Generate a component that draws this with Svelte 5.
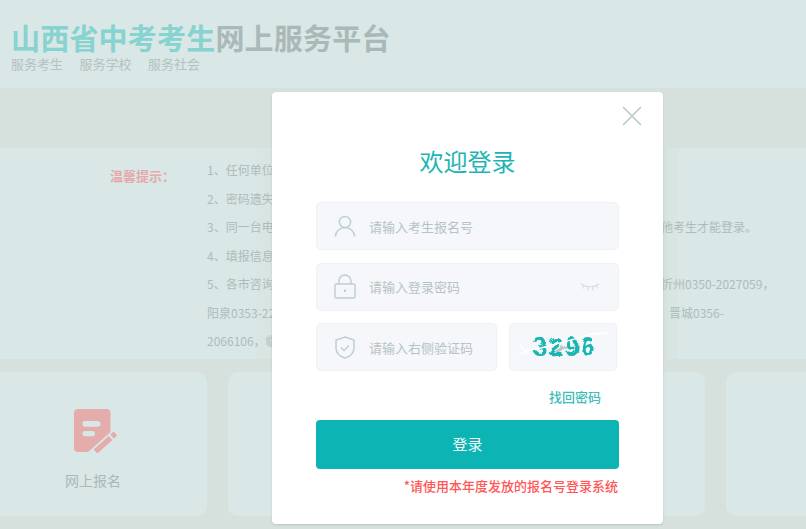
<script>
  const subNav = ['服务考生', '服务学校', '服务社会'];
  // 弹窗后面的提示文字，只有露出来的部分才写全
  const tips = [
    { lead: '1、任何单位' },
    { lead: '2、密码遗失' },
    { lead: '3、同一台电', tail: '他考生才能登录。' },
    { lead: '4、填报信息' },
    { lead: '5、各市咨询', tail: '忻州0350-2027059，' },
    { lead: '阳泉0353-22', tail: '晋城0356-', shift: true },
    { lead: '2066106，临' }
  ];
</script>

<div class="page">
  <header class="top">
    <h1><span class="accent">山西省中考考生</span>网上服务平台</h1>
    <nav class="sub">
      {#each subNav as item}
        <span>{item}</span>
      {/each}
    </nav>
  </header>

  <div class="band"></div>

  <section class="notice">
    <div class="notice-title">温馨提示：</div>
    <div class="notice-list">
      {#each tips as tip}
        <div class="tip">
          <span class="lead">{tip.lead}</span>
          {#if tip.tail}
            <span class="tail" class:shift={tip.shift}>{tip.tail}</span>
          {/if}
        </div>
      {/each}
    </div>
  </section>

  <section class="cards">
    <div class="card">
      <svg class="card-icon" viewBox="0 0 43 44" width="43" height="44" aria-hidden="true">
        <path d="M4 0h28.500a4 4 0 0 1 4 4v19L14 43H4a4 4 0 0 1-4-4V4a4 4 0 0 1 4-4z" fill="#e5acac" />
        <rect x="8.500" y="12" width="18" height="5.700" rx="2.850" fill="#d9e7e6" />
        <rect x="8.500" y="22" width="12.500" height="5.200" rx="2.600" fill="#d9e7e6" />
        <path d="M21.500 42.500l15-13.500M38 27.500l3.500-3" stroke="#e5acac" stroke-width="5.500" fill="none" />
      </svg>
      <div class="card-label">网上报名</div>
    </div>
    <div class="card"></div>
    <div class="card"></div>
    <div class="card"></div>
  </section>

  <div class="modal">
    <button class="close" aria-label="关闭">
      <svg viewBox="0 0 20 20" width="20" height="20">
        <path d="M1 1l18 18M19 1L1 19" stroke="#bccccb" stroke-width="1.700" fill="none" />
      </svg>
    </button>

    <h2>欢迎登录</h2>

    <div class="field">
      <svg class="ico" viewBox="0 0 22 22" width="22" height="22">
        <circle cx="11" cy="7" r="5.600" />
        <path d="M1.300 21.500c.6-5.400 4.600-8.900 9.700-8.900s9.100 3.500 9.700 8.900" />
      </svg>
      <span class="ph">请输入考生报名号</span>
    </div>

    <div class="field">
      <svg class="ico" viewBox="0 0 22 25" width="22" height="25">
        <rect x="1" y="10" width="20" height="14" rx="1.500" />
        <path d="M5 10V7a6 6 0 0 1 12 0v3" />
        <path d="M11 15.500v2.500" stroke-width="2" />
      </svg>
      <span class="ph">请输入登录密码</span>
      <svg class="eye" viewBox="0 0 20 12" width="20" height="12">
        <path d="M1 2.500c2.500 2.300 5.500 3.300 9 3.300s6.500-1 9-3.300M4 4.500L2.200 7.500M8 5.800l-.5 3.700M12.500 5.800l.5 3.700M16 4.500l1.800 3" />
      </svg>
    </div>

    <div class="verify">
      <div class="field grow">
        <svg class="ico" viewBox="0 0 22 23" width="22" height="23">
          <path d="M11 1l9 3v8c0 5-3.800 8.300-9 10-5.200-1.700-9-5-9-10V4z" />
          <path d="M7 11.500l3 3 5-5" />
        </svg>
        <span class="ph">请输入右侧验证码</span>
      </div>
      <div class="captcha">
        <svg viewBox="0 0 108 48" width="108" height="48">
          <defs>
            <filter id="smear" x="-10%" y="-30%" width="120%" height="160%">
              <feTurbulence type="fractalNoise" baseFrequency="0.09" numOctaves="2" seed="4" />
              <feDisplacementMap in="SourceGraphic" scale="7" />
              <feGaussianBlur stdDeviation="0.6" />
            </filter>
          </defs>
          <path d="M44 33l16-11" stroke="#b5c4c4" stroke-width="3" filter="url(#smear)" />
          <text class="code" x="24" y="33" filter="url(#smear)">3296</text>
          <path d="M10 19l8 13M9 32l11-5 12-2 34-9 16-5 18-1" stroke="#fff" stroke-width="1.300" fill="none" />
        </svg>
      </div>
    </div>

    <a class="forgot" href="#forgot">找回密码</a>
    <button class="submit">登录</button>
    <p class="warn">*请使用本年度发放的报名号登录系统</p>
  </div>
</div>

<style>
  :global(body) {
    margin: 0;
  }

  .page {
    position: relative;
    width: 806px;
    height: 529px;
    overflow: hidden;
    background: #d6e1dd;
    font-family: "Noto Sans CJK SC", "Noto Sans", sans-serif;
  }

  .top {
    height: 88px;
    box-sizing: border-box;
    padding: 18px 0 0 11px;
    background: #d9e7e6;
  }

  h1 {
    margin: 0;
    font-size: 29px;
    line-height: 38px;
    letter-spacing: 0.2px;
    font-weight: 700;
    color: #a9b9b8;
  }

  .accent {
    color: #86d3d0;
  }

  .sub {
    display: flex;
    gap: 16.500px;
    font-size: 13px;
    line-height: 16px;
    color: #b4c2c1;
  }

  .band {
    height: 60px;
  }

  .notice {
    display: flex;
    height: 211px;
    box-sizing: border-box;
    padding: 8px 0 0 110px;
    background: linear-gradient(90deg, #d9e7e6 256px, #d8e5e3 256px 272px, #d6e2de 663px 668px, #d8e5e2 668px 678px, #d9e7e6 678px);
    font-size: 12px;
    color: #adbcbb;
  }

  .notice-title {
    width: 97px;
    padding-top: 10px;
    font-size: 13px;
    line-height: 20px;
    font-weight: 700;
    color: #e5a9a9;
  }

  .tip {
    display: flex;
    line-height: 28.500px;
    white-space: nowrap;
  }

  .lead {
    width: 454px;
  }

  .tail.shift {
    padding-left: 8px;
  }

  .cards {
    display: flex;
    gap: 21px;
    margin: 13px 0 0 -21px;
  }

  .card {
    flex: 0 0 228px;
    height: 144px;
    border-radius: 10px;
    background: #d9e7e6;
    display: flex;
    flex-direction: column;
    align-items: center;
    padding-top: 37px;
    box-sizing: border-box;
  }

  .card-icon {
    margin-left: 5px;
  }

  .card-label {
    margin-top: 17px;
    font-size: 14px;
    line-height: 20px;
    color: #a9b8b7;
  }

  .modal {
    position: absolute;
    left: 272px;
    top: 92px;
    width: 391px;
    height: 432px;
    box-sizing: border-box;
    padding: 51px 44px 0;
    border-radius: 4px;
    background: #fff;
    box-shadow: 0 1px 2px rgba(150, 175, 170, 0.5);
    display: flex;
    flex-direction: column;
  }

  .close {
    position: absolute;
    top: 14px;
    right: 21px;
    padding: 0;
    border: 0;
    background: none;
    line-height: 0;
  }

  h2 {
    margin: 0 0 23px;
    font-size: 24px;
    line-height: 36px;
    font-weight: 400;
    text-align: center;
    color: #1db5b3;
  }

  .field {
    display: flex;
    align-items: center;
    height: 48px;
    box-sizing: border-box;
    margin-bottom: 12.500px;
    border: 1px solid #eef1f5;
    border-radius: 5px;
    background: #f5f7fb;
  }

  .field.grow {
    flex: 0 0 181px;
    margin: 0;
  }

  .ico {
    flex: 0 0 auto;
    margin: 0 13px 0 17px;
    fill: none;
    stroke: #bed0ce;
    stroke-width: 1.500;
  }

  .ph {
    flex: 1;
    font-size: 13px;
    color: #b5c3c3;
  }

  .eye {
    margin-right: 18px;
    fill: none;
    stroke: #cfe0de;
    stroke-width: 1.100;
  }

  .verify {
    display: flex;
    gap: 12px;
    height: 48px;
  }

  .captcha {
    width: 108px;
    height: 48px;
    border-radius: 5px;
    background: #f5f7fb;
    box-shadow: inset 0 0 0 1px #eef1f5;
    line-height: 0;
  }

  .code {
    font-family: "Liberation Sans", sans-serif;
    font-size: 26px;
    font-weight: 700;
    letter-spacing: 1.500px;
    fill: #18b6b2;
  }

  .forgot {
    align-self: flex-end;
    margin: 15.500px 18px 13.500px 0;
    font-size: 13px;
    line-height: 20px;
    font-weight: 500;
    color: #40bcb9;
    text-decoration: none;
  }

  .submit {
    width: 303px;
    height: 48.500px;
    padding: 0 0 1px;
    border: 0;
    border-radius: 4px;
    background: #0cb5b3;
    color: #f2fbfa;
    font-family: inherit;
    font-size: 15px;
  }

  .warn {
    margin: 7.500px 1px 0 0;
    font-size: 13px;
    line-height: 20px;
    font-weight: 500;
    text-align: right;
    color: #ff5757;
  }
</style>
